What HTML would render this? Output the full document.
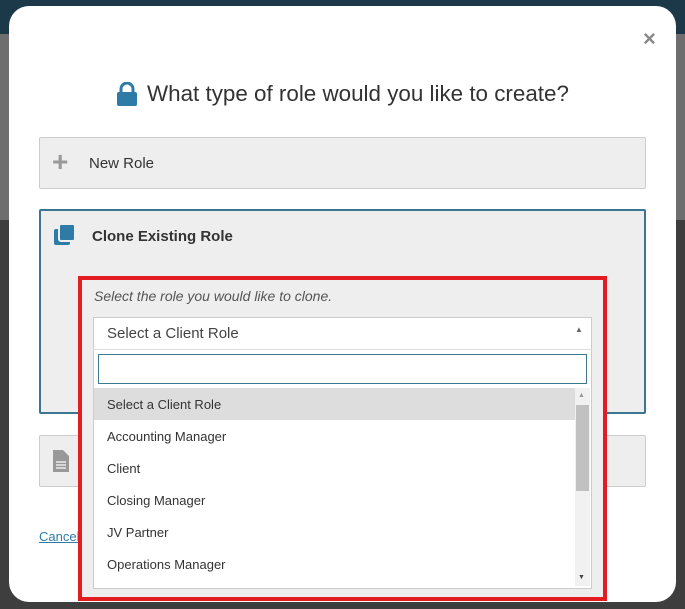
<!DOCTYPE html>
<html><head><style>
body{margin:0;width:685px;height:609px;overflow:hidden;position:relative;font-family:"Liberation Sans",sans-serif;background:#4a4a4a}
.a{position:absolute}
</style></head><body>
<div class="a" style="left:0;top:0;width:685px;height:34px;background:#1b3948"></div>
<div class="a" style="left:0;top:34px;width:685px;height:186px;background:#6e6e6e"></div>
<div class="a" style="left:0;top:220px;width:685px;height:389px;background:#3e3e3e"></div>
<div class="a" style="left:9px;top:6px;width:667px;height:596px;background:#fff;border-radius:20px"></div>
<div class="a" style="left:643px;top:26px;font-size:22px;font-weight:bold;color:#888">×</div>
<svg class="a" style="left:116px;top:82px" width="22" height="24" viewBox="0 0 22 24"><path d="M5 10V7a6 6 0 0 1 12 0v3" fill="none" stroke="#2d7ba6" stroke-width="3"/><rect x="1" y="10" width="20" height="14" rx="2" fill="#2d7ba6"/></svg>
<div class="a" style="left:147px;top:81px;font-size:22.4px;color:#333">What type of role would you like to create?</div>
<div class="a" style="left:39px;top:137px;width:605px;height:50px;background:#eee;border:1px solid #ccc;border-radius:2px"></div>
<div class="a" style="left:52px;top:150px;font-size:28px;line-height:24px;color:#999;font-weight:bold">+</div>
<div class="a" style="left:89px;top:155px;font-size:15px;color:#333">New Role</div>
<div class="a" style="left:39px;top:209px;width:603px;height:201px;background:#eee;border:2px solid #3b7690;border-radius:2px"></div>
<svg class="a" style="left:53px;top:224px" width="24" height="24"><rect x="1" y="5" width="16" height="16" rx="2" fill="#2d7ba6"/><rect x="6" y="0" width="16" height="17" rx="2" fill="#2d7ba6" stroke="#eee" stroke-width="2"/></svg>
<div class="a" style="left:92px;top:228px;font-size:15px;font-weight:bold;color:#333">Clone Existing Role</div>
<div class="a" style="left:39px;top:435px;width:605px;height:50px;background:#eee;border:1px solid #ccc;border-radius:2px"></div>
<svg class="a" style="left:52px;top:449px" width="18" height="24"><path d="M1 1h10l6 6v16H1z" fill="#999"/><path d="M4 13h10M4 16h10M4 19h10" stroke="#eee" stroke-width="1.5"/></svg>
<div class="a" style="left:86px;top:453px;font-size:15px;color:#333">T</div>
<div class="a" style="left:39px;top:529px;font-size:13px;color:#2d7ba6;text-decoration:underline">Cancel</div>
<div class="a" style="left:78px;top:276px;width:521px;height:317px;border:4px solid #e31b23;background:#eee"></div>
<div class="a" style="left:94px;top:288px;font-size:14px;font-style:italic;color:#555">Select the role you would like to clone.</div>
<div class="a" style="left:93px;top:317px;width:497px;height:270px;background:#fff;border:1px solid #ccc"></div>
<div class="a" style="left:93px;top:349px;width:499px;height:1px;background:#ddd"></div>
<div class="a" style="left:107px;top:325px;font-size:15px;color:#444">Select a Client Role</div>
<div class="a" style="left:575px;top:325px;font-size:8px;color:#666">▲</div>
<div class="a" style="left:98px;top:354px;width:487px;height:28px;border:1px solid #3d7a8f"></div>
<div class="a" style="left:94px;top:388px;width:481px;height:32px;background:#ddd"></div>
<div class="a" style="left:575px;top:388px;width:15px;height:198px;background:#f1f1f1"></div>
<div class="a" style="left:576px;top:405px;width:13px;height:86px;background:#c1c1c1"></div>
<div class="a" style="left:578px;top:392px;font-size:7px;color:#999">▲</div>
<div class="a" style="left:578px;top:574px;font-size:7px;color:#444">▼</div>
<div class="a" style="left:107px;top:397px;font-size:13px;color:#333;line-height:16px">Select a Client Role</div>
<div class="a" style="left:107px;top:429px;font-size:13px;color:#333;line-height:16px">Accounting Manager</div>
<div class="a" style="left:107px;top:461px;font-size:13px;color:#333;line-height:16px">Client</div>
<div class="a" style="left:107px;top:493px;font-size:13px;color:#333;line-height:16px">Closing Manager</div>
<div class="a" style="left:107px;top:525px;font-size:13px;color:#333;line-height:16px">JV Partner</div>
<div class="a" style="left:107px;top:557px;font-size:13px;color:#333;line-height:16px">Operations Manager</div>
</body></html>
